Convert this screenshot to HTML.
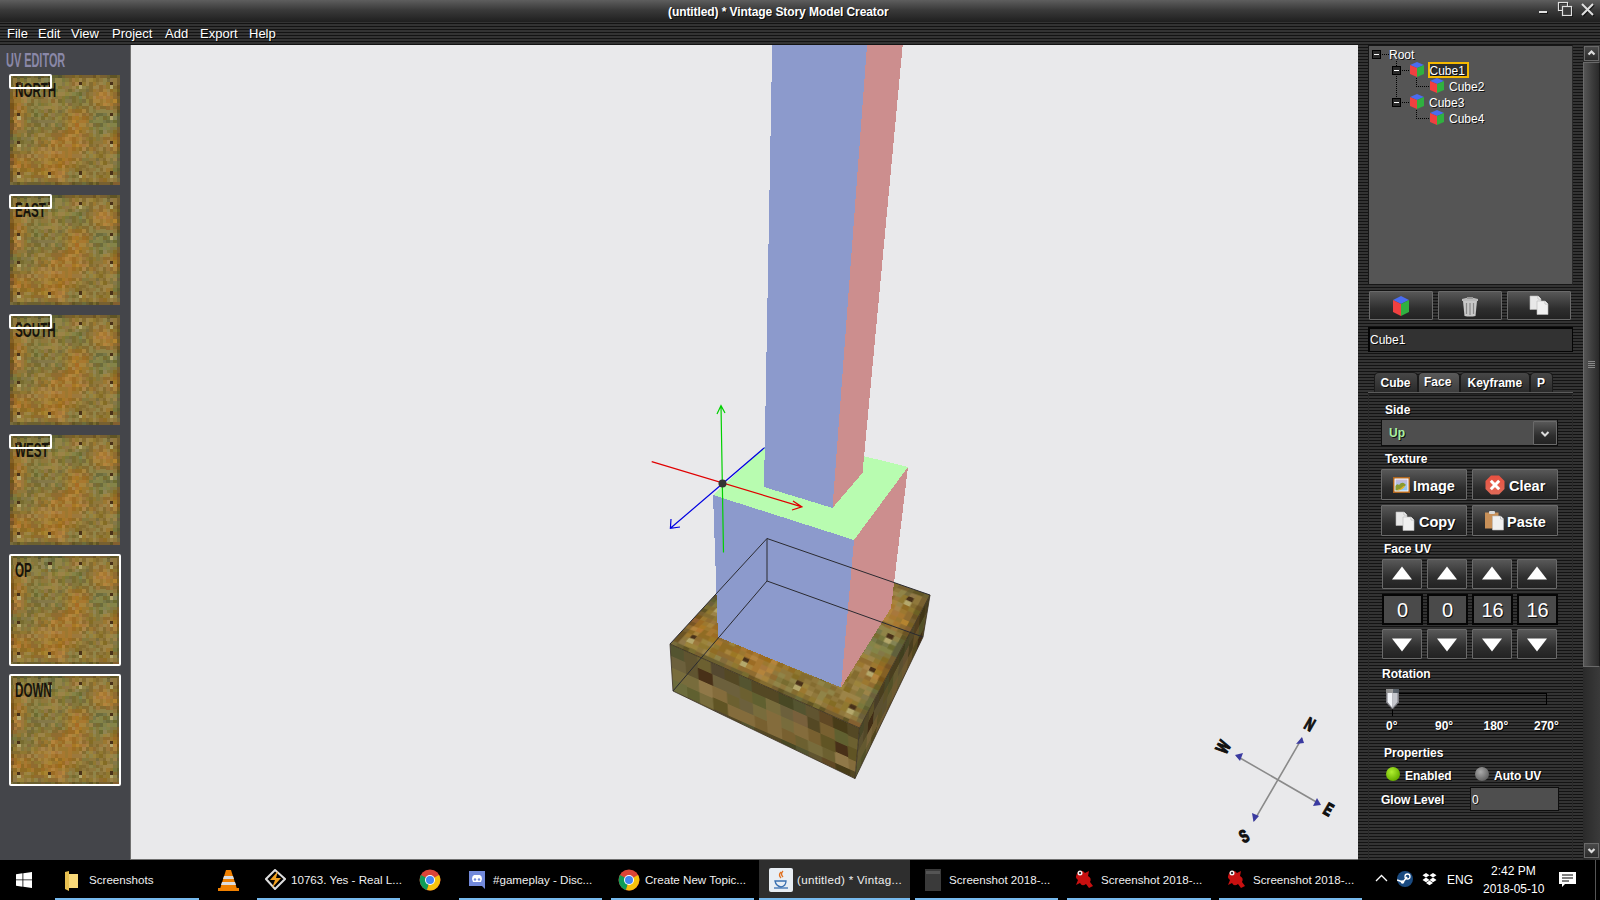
<!DOCTYPE html><html><head><meta charset='utf-8'><style>
*{margin:0;padding:0;box-sizing:border-box}
html,body{width:1600px;height:900px;overflow:hidden;background:#000;font-family:"Liberation Sans",sans-serif}
.a{position:absolute}
.t{position:absolute;white-space:nowrap;color:#fff;font-size:12px;line-height:1;text-shadow:1px 1px 0 rgba(0,0,0,.75)}
.stripes{background:repeating-linear-gradient(to bottom,#333 0px,#333 1px,#131313 1px,#131313 2px,#333 2px,#333 3px)}
.btn{position:absolute;border:1px solid #6a6a6a;background:linear-gradient(#585858,#2e2e2e 62%,#222);border-radius:1px}
.fld{position:absolute;border:1px solid #0e0e0e}
.lbl{position:absolute;white-space:nowrap;color:#fff;font-size:12px;font-weight:bold;line-height:1;text-shadow:1px 1px 0 rgba(0,0,0,.8)}
.tb{position:absolute;white-space:nowrap;color:#fff;font-size:13px;line-height:1}
.ul{position:absolute;top:898px;height:2px;background:#76b9ed}
</style></head><body><div class="a" style="left:0;top:0;width:1600px;height:22px;background:linear-gradient(#5e5e5e,#3a3a3a 45%,#1f1f1f)"></div><div class="t" style="left:668px;top:6px;font-size:12px;font-weight:bold;letter-spacing:-0.08px">(untitled) * Vintage Story Model Creator</div><svg class="a" style="left:1530px;top:0" width="70" height="22" viewBox="1530 0 70 22"><g stroke="#000" stroke-opacity=".6" fill="none" transform="translate(1,1)"><path d="M1539 12H1547" stroke-width="2"/><rect x="1558.5" y="2.5" width="9" height="8"/><rect x="1562.5" y="6.5" width="9" height="9"/><path d="M1582 4L1593 15M1593 4L1582 15" stroke-width="2"/></g><g stroke="#e0e0e0" fill="none"><path d="M1539 12H1547" stroke-width="2"/><rect x="1558.5" y="2.5" width="9" height="8" stroke-width="1.2"/><rect x="1562.5" y="6.5" width="9" height="9" fill="#3a3a3a" stroke-width="1.2"/><path d="M1582 4L1593 15M1593 4L1582 15" stroke-width="2"/></g></svg><div class="a stripes" style="left:0;top:22px;width:1600px;height:838px"></div><div class="t" style="left:7px;top:27px;font-size:13px">File</div><div class="t" style="left:38px;top:27px;font-size:13px">Edit</div><div class="t" style="left:71px;top:27px;font-size:13px">View</div><div class="t" style="left:112px;top:27px;font-size:13px">Project</div><div class="t" style="left:165px;top:27px;font-size:13px">Add</div><div class="t" style="left:200px;top:27px;font-size:13px">Export</div><div class="t" style="left:249px;top:27px;font-size:13px">Help</div><div class="a" style="left:0;top:45px;width:130px;height:815px;background:#44454a"></div><div class="a" style="left:6px;top:49px;font-size:21px;font-weight:bold;color:#8a88a8;transform:scaleX(0.52);transform-origin:0 0;white-space:nowrap;line-height:1">UV EDITOR</div><svg width="0" height="0" style="position:absolute"><defs><symbol id="tex" viewBox="0 0 32 32"><path fill="#786c3c" d="M0 0h1.08v1.08h-1.08zM6 0h1.08v1.08h-1.08zM2 1h1.08v1.08h-1.08zM4 1h1.08v1.08h-1.08zM8 1h1.08v1.08h-1.08zM28 1h1.08v1.08h-1.08zM22 4h1.08v1.08h-1.08zM17 6h1.08v1.08h-1.08zM21 7h1.08v1.08h-1.08zM14 10h1.08v1.08h-1.08zM6 12h1.08v1.08h-1.08zM6 13h2.08v1.08h-2.08zM10 14h1.08v1.08h-1.08zM24 14h1.08v1.08h-1.08zM6 15h1.08v1.08h-1.08zM5 16h1.08v1.08h-1.08zM25 24h1.08v1.08h-1.08zM31 30h1.08v1.08h-1.08zM0 31h1.08v1.08h-1.08z"/><path fill="#605424" d="M1 0h1.08v1.08h-1.08zM9 0h1.08v1.08h-1.08zM29 0h2.08v1.08h-2.08zM31 10h1.08v1.08h-1.08zM0 21h1.08v1.08h-1.08zM2 31h1.08v1.08h-1.08zM18 31h1.08v1.08h-1.08zM23 31h1.08v1.08h-1.08zM25 31h1.08v1.08h-1.08zM29 31h1.08v1.08h-1.08z"/><path fill="#606030" d="M2 0h1.08v1.08h-1.08zM4 0h1.08v1.08h-1.08zM12 0h2.08v1.08h-2.08zM31 11h1.08v1.08h-1.08zM0 18h1.08v1.08h-1.08zM31 27h1.08v1.08h-1.08z"/><path fill="#605430" d="M3 0h1.08v1.08h-1.08zM0 17h1.08v1.08h-1.08z"/><path fill="#6c6030" d="M5 0h1.08v1.08h-1.08zM7 0h1.08v1.08h-1.08zM10 0h1.08v1.08h-1.08zM15 0h1.08v1.08h-1.08zM28 0h1.08v1.08h-1.08zM31 0h1.08v1.08h-1.08zM0 1h1.08v1.08h-1.08zM0 2h1.08v1.08h-1.08zM31 28h1.08v1.08h-1.08zM1 31h1.08v1.08h-1.08zM5 31h4.08v1.08h-4.08zM10 31h2.08v1.08h-2.08zM19 31h2.08v1.08h-2.08zM22 31h1.08v1.08h-1.08z"/><path fill="#545430" d="M8 0h1.08v1.08h-1.08zM14 0h1.08v1.08h-1.08z"/><path fill="#545424" d="M11 0h1.08v1.08h-1.08z"/><path fill="#786030" d="M16 0h2.08v1.08h-2.08zM21 0h3.08v1.08h-3.08zM26 0h2.08v1.08h-2.08zM31 1h1.08v1.08h-1.08zM31 2h1.08v1.08h-1.08zM0 4h1.08v1.08h-1.08zM31 6h1.08v1.08h-1.08zM31 15h1.08v1.08h-1.08zM31 16h1.08v1.08h-1.08zM0 22h1.08v1.08h-1.08zM0 27h1.08v1.08h-1.08zM4 31h1.08v1.08h-1.08zM9 31h1.08v1.08h-1.08zM17 31h1.08v1.08h-1.08zM26 31h3.08v1.08h-3.08z"/><path fill="#786024" d="M18 0h1.08v1.08h-1.08zM20 0h1.08v1.08h-1.08zM0 5h1.08v1.08h-1.08zM0 6h1.08v1.08h-1.08zM31 7h1.08v1.08h-1.08zM0 12h1.08v1.08h-1.08zM31 21h1.08v1.08h-1.08zM14 31h1.08v1.08h-1.08z"/><path fill="#846c30" d="M19 0h1.08v1.08h-1.08zM25 0h1.08v1.08h-1.08zM17 1h1.08v1.08h-1.08zM21 1h1.08v1.08h-1.08zM25 1h1.08v1.08h-1.08zM23 2h1.08v1.08h-1.08zM23 3h1.08v1.08h-1.08zM30 3h1.08v1.08h-1.08zM10 4h1.08v1.08h-1.08zM23 4h1.08v1.08h-1.08zM5 5h1.08v1.08h-1.08zM22 5h1.08v1.08h-1.08zM7 6h1.08v1.08h-1.08zM9 6h1.08v1.08h-1.08zM22 6h1.08v1.08h-1.08zM6 7h1.08v1.08h-1.08zM23 7h1.08v1.08h-1.08zM5 8h1.08v1.08h-1.08zM23 8h1.08v1.08h-1.08zM19 9h1.08v1.08h-1.08zM21 9h2.08v1.08h-2.08zM24 9h1.08v1.08h-1.08zM26 9h2.08v1.08h-2.08zM30 9h1.08v1.08h-1.08zM22 10h1.08v1.08h-1.08zM4 11h1.08v1.08h-1.08zM16 11h1.08v1.08h-1.08zM23 11h1.08v1.08h-1.08zM4 12h1.08v1.08h-1.08zM12 12h1.08v1.08h-1.08zM15 12h1.08v1.08h-1.08zM5 14h1.08v1.08h-1.08zM15 14h1.08v1.08h-1.08zM9 15h1.08v1.08h-1.08zM13 15h1.08v1.08h-1.08zM9 16h1.08v1.08h-1.08zM12 16h2.08v1.08h-2.08zM8 18h1.08v1.08h-1.08zM23 18h1.08v1.08h-1.08zM9 19h1.08v1.08h-1.08zM1 20h1.08v1.08h-1.08zM8 20h1.08v1.08h-1.08zM10 20h1.08v1.08h-1.08zM23 20h1.08v1.08h-1.08zM25 20h1.08v1.08h-1.08zM22 21h1.08v1.08h-1.08zM27 21h1.08v1.08h-1.08zM1 22h2.08v1.08h-2.08zM5 22h1.08v1.08h-1.08zM21 22h1.08v1.08h-1.08zM25 22h1.08v1.08h-1.08zM27 22h1.08v1.08h-1.08zM27 24h1.08v1.08h-1.08zM22 25h1.08v1.08h-1.08zM20 26h2.08v1.08h-2.08zM25 26h1.08v1.08h-1.08zM20 27h1.08v1.08h-1.08zM22 27h1.08v1.08h-1.08zM26 27h1.08v1.08h-1.08zM23 28h1.08v1.08h-1.08zM25 28h1.08v1.08h-1.08zM27 28h1.08v1.08h-1.08zM30 28h1.08v1.08h-1.08zM20 30h1.08v1.08h-1.08zM22 30h1.08v1.08h-1.08zM15 31h2.08v1.08h-2.08z"/><path fill="#6c5424" d="M24 0h1.08v1.08h-1.08zM31 3h1.08v1.08h-1.08zM31 5h1.08v1.08h-1.08zM31 9h1.08v1.08h-1.08zM0 16h1.08v1.08h-1.08zM0 28h1.08v1.08h-1.08zM0 29h1.08v1.08h-1.08zM0 30h1.08v1.08h-1.08zM13 31h1.08v1.08h-1.08z"/><path fill="#90783c" d="M1 1h1.08v1.08h-1.08zM26 1h1.08v1.08h-1.08zM30 1h1.08v1.08h-1.08zM1 2h1.08v1.08h-1.08zM6 2h1.08v1.08h-1.08zM17 2h1.08v1.08h-1.08zM25 2h1.08v1.08h-1.08zM30 2h1.08v1.08h-1.08zM4 3h1.08v1.08h-1.08zM15 3h1.08v1.08h-1.08zM17 3h1.08v1.08h-1.08zM2 4h1.08v1.08h-1.08zM16 4h1.08v1.08h-1.08zM18 4h1.08v1.08h-1.08zM23 5h1.08v1.08h-1.08zM6 6h1.08v1.08h-1.08zM12 6h1.08v1.08h-1.08zM14 6h1.08v1.08h-1.08zM9 7h2.08v1.08h-2.08zM14 9h1.08v1.08h-1.08zM30 10h1.08v1.08h-1.08zM16 12h1.08v1.08h-1.08zM23 12h1.08v1.08h-1.08zM15 13h1.08v1.08h-1.08zM6 14h1.08v1.08h-1.08zM22 14h1.08v1.08h-1.08zM12 15h1.08v1.08h-1.08zM2 16h3.08v1.08h-3.08zM10 16h1.08v1.08h-1.08zM23 16h1.08v1.08h-1.08zM10 18h1.08v1.08h-1.08zM26 18h1.08v1.08h-1.08zM24 19h3.08v1.08h-3.08zM7 20h1.08v1.08h-1.08zM24 20h1.08v1.08h-1.08zM4 21h1.08v1.08h-1.08zM25 21h1.08v1.08h-1.08zM28 22h1.08v1.08h-1.08zM27 23h1.08v1.08h-1.08zM23 24h2.08v1.08h-2.08zM26 24h1.08v1.08h-1.08zM21 25h1.08v1.08h-1.08zM28 25h1.08v1.08h-1.08zM22 26h1.08v1.08h-1.08zM26 26h1.08v1.08h-1.08zM17 27h2.08v1.08h-2.08zM21 27h1.08v1.08h-1.08zM23 27h2.08v1.08h-2.08zM16 28h1.08v1.08h-1.08zM18 28h1.08v1.08h-1.08zM22 28h1.08v1.08h-1.08zM26 28h1.08v1.08h-1.08zM1 29h1.08v1.08h-1.08zM23 29h1.08v1.08h-1.08zM27 29h1.08v1.08h-1.08zM4 30h1.08v1.08h-1.08zM9 30h1.08v1.08h-1.08zM16 30h1.08v1.08h-1.08zM18 30h1.08v1.08h-1.08zM25 30h1.08v1.08h-1.08zM28 30h1.08v1.08h-1.08zM30 30h1.08v1.08h-1.08z"/><path fill="#847830" d="M3 1h1.08v1.08h-1.08zM4 2h1.08v1.08h-1.08zM14 3h1.08v1.08h-1.08zM19 3h1.08v1.08h-1.08zM9 4h1.08v1.08h-1.08zM12 5h1.08v1.08h-1.08zM15 6h1.08v1.08h-1.08zM15 7h1.08v1.08h-1.08zM9 8h1.08v1.08h-1.08zM15 8h1.08v1.08h-1.08zM9 10h1.08v1.08h-1.08zM4 15h1.08v1.08h-1.08zM8 15h1.08v1.08h-1.08zM23 15h1.08v1.08h-1.08zM8 16h1.08v1.08h-1.08z"/><path fill="#908448" d="M5 1h1.08v1.08h-1.08zM9 1h1.08v1.08h-1.08zM13 1h2.08v1.08h-2.08zM27 1h1.08v1.08h-1.08zM3 2h1.08v1.08h-1.08zM5 2h1.08v1.08h-1.08zM9 2h1.08v1.08h-1.08zM13 2h2.08v1.08h-2.08zM27 2h1.08v1.08h-1.08zM7 3h1.08v1.08h-1.08zM13 3h1.08v1.08h-1.08zM21 3h1.08v1.08h-1.08zM6 4h3.08v1.08h-3.08zM14 4h2.08v1.08h-2.08zM7 5h1.08v1.08h-1.08zM17 5h1.08v1.08h-1.08zM5 6h1.08v1.08h-1.08zM21 6h1.08v1.08h-1.08zM5 7h1.08v1.08h-1.08zM7 7h1.08v1.08h-1.08zM11 7h1.08v1.08h-1.08zM4 8h1.08v1.08h-1.08zM7 8h1.08v1.08h-1.08zM14 8h1.08v1.08h-1.08zM21 8h2.08v1.08h-2.08zM6 9h1.08v1.08h-1.08zM8 9h2.08v1.08h-2.08zM15 9h1.08v1.08h-1.08zM23 9h1.08v1.08h-1.08zM13 10h1.08v1.08h-1.08zM23 10h1.08v1.08h-1.08zM25 10h5.08v1.08h-5.08zM6 11h1.08v1.08h-1.08zM11 11h1.08v1.08h-1.08zM24 11h1.08v1.08h-1.08zM28 11h1.08v1.08h-1.08zM30 11h1.08v1.08h-1.08zM8 12h1.08v1.08h-1.08zM10 12h1.08v1.08h-1.08zM13 12h1.08v1.08h-1.08zM25 12h1.08v1.08h-1.08zM13 13h1.08v1.08h-1.08zM28 14h1.08v1.08h-1.08zM5 15h1.08v1.08h-1.08zM7 15h1.08v1.08h-1.08zM15 15h1.08v1.08h-1.08zM11 16h1.08v1.08h-1.08zM24 17h1.08v1.08h-1.08zM26 17h1.08v1.08h-1.08zM6 18h1.08v1.08h-1.08zM4 20h1.08v1.08h-1.08zM22 22h1.08v1.08h-1.08zM23 23h1.08v1.08h-1.08zM30 23h1.08v1.08h-1.08zM23 26h1.08v1.08h-1.08zM25 27h1.08v1.08h-1.08zM17 28h1.08v1.08h-1.08zM19 28h1.08v1.08h-1.08zM24 28h1.08v1.08h-1.08zM24 29h1.08v1.08h-1.08zM30 29h1.08v1.08h-1.08zM7 30h1.08v1.08h-1.08zM17 30h1.08v1.08h-1.08zM19 30h1.08v1.08h-1.08z"/><path fill="#84783c" d="M6 1h2.08v1.08h-2.08zM16 1h1.08v1.08h-1.08zM7 2h1.08v1.08h-1.08zM6 3h1.08v1.08h-1.08zM22 3h1.08v1.08h-1.08zM20 4h2.08v1.08h-2.08zM10 5h1.08v1.08h-1.08zM13 6h1.08v1.08h-1.08zM19 6h1.08v1.08h-1.08zM8 7h1.08v1.08h-1.08zM19 7h1.08v1.08h-1.08zM10 8h1.08v1.08h-1.08zM18 8h2.08v1.08h-2.08zM5 9h1.08v1.08h-1.08zM7 9h1.08v1.08h-1.08zM16 9h1.08v1.08h-1.08zM18 9h1.08v1.08h-1.08zM5 10h1.08v1.08h-1.08zM8 10h1.08v1.08h-1.08zM15 10h1.08v1.08h-1.08zM24 10h1.08v1.08h-1.08zM13 11h2.08v1.08h-2.08zM5 12h1.08v1.08h-1.08zM7 12h1.08v1.08h-1.08zM11 12h1.08v1.08h-1.08zM14 13h1.08v1.08h-1.08zM11 14h1.08v1.08h-1.08zM10 15h2.08v1.08h-2.08zM25 15h1.08v1.08h-1.08zM30 15h1.08v1.08h-1.08zM7 16h1.08v1.08h-1.08zM25 16h1.08v1.08h-1.08zM28 16h2.08v1.08h-2.08zM1 17h1.08v1.08h-1.08zM3 17h1.08v1.08h-1.08zM25 17h1.08v1.08h-1.08zM4 18h1.08v1.08h-1.08zM25 18h1.08v1.08h-1.08zM1 19h1.08v1.08h-1.08zM4 19h2.08v1.08h-2.08zM3 20h1.08v1.08h-1.08zM6 20h1.08v1.08h-1.08zM3 21h1.08v1.08h-1.08zM5 21h1.08v1.08h-1.08zM21 24h2.08v1.08h-2.08zM29 24h1.08v1.08h-1.08zM29 25h1.08v1.08h-1.08zM24 26h1.08v1.08h-1.08zM30 26h1.08v1.08h-1.08zM17 29h1.08v1.08h-1.08zM19 29h1.08v1.08h-1.08z"/><path fill="#848454" d="M10 1h1.08v1.08h-1.08zM11 4h1.08v1.08h-1.08zM30 12h1.08v1.08h-1.08zM27 15h1.08v1.08h-1.08z"/><path fill="#787848" d="M11 1h1.08v1.08h-1.08zM10 3h1.08v1.08h-1.08zM12 3h1.08v1.08h-1.08zM27 11h1.08v1.08h-1.08zM24 12h1.08v1.08h-1.08zM27 13h1.08v1.08h-1.08zM29 13h1.08v1.08h-1.08z"/><path fill="#6c6c3c" d="M12 1h1.08v1.08h-1.08zM10 2h1.08v1.08h-1.08zM25 11h2.08v1.08h-2.08zM28 13h1.08v1.08h-1.08zM26 14h1.08v1.08h-1.08zM31 23h1.08v1.08h-1.08zM31 25h1.08v1.08h-1.08zM31 26h1.08v1.08h-1.08zM21 31h1.08v1.08h-1.08z"/><path fill="#78783c" d="M15 1h1.08v1.08h-1.08zM12 2h1.08v1.08h-1.08zM13 4h1.08v1.08h-1.08zM19 5h1.08v1.08h-1.08zM16 6h1.08v1.08h-1.08zM20 7h1.08v1.08h-1.08zM8 8h1.08v1.08h-1.08zM28 12h1.08v1.08h-1.08zM23 13h1.08v1.08h-1.08zM13 14h1.08v1.08h-1.08zM1 18h1.08v1.08h-1.08zM30 27h1.08v1.08h-1.08z"/><path fill="#9c783c" d="M18 1h1.08v1.08h-1.08zM27 3h1.08v1.08h-1.08zM4 4h1.08v1.08h-1.08zM25 4h1.08v1.08h-1.08zM1 5h1.08v1.08h-1.08zM24 5h1.08v1.08h-1.08zM3 8h1.08v1.08h-1.08zM25 9h1.08v1.08h-1.08zM29 9h1.08v1.08h-1.08zM22 11h1.08v1.08h-1.08zM3 12h1.08v1.08h-1.08zM3 13h1.08v1.08h-1.08zM3 14h1.08v1.08h-1.08zM3 15h1.08v1.08h-1.08zM14 16h1.08v1.08h-1.08zM21 18h1.08v1.08h-1.08zM22 19h1.08v1.08h-1.08zM26 20h1.08v1.08h-1.08zM28 20h1.08v1.08h-1.08zM8 21h1.08v1.08h-1.08zM10 21h1.08v1.08h-1.08zM28 21h1.08v1.08h-1.08zM3 23h1.08v1.08h-1.08zM8 23h2.08v1.08h-2.08zM18 23h3.08v1.08h-3.08zM9 25h1.08v1.08h-1.08zM3 29h1.08v1.08h-1.08zM15 29h1.08v1.08h-1.08z"/><path fill="#907830" d="M19 1h1.08v1.08h-1.08zM24 1h1.08v1.08h-1.08zM21 2h1.08v1.08h-1.08zM28 2h1.08v1.08h-1.08zM3 3h1.08v1.08h-1.08zM28 3h1.08v1.08h-1.08zM1 4h1.08v1.08h-1.08zM30 4h1.08v1.08h-1.08zM23 6h1.08v1.08h-1.08zM20 9h1.08v1.08h-1.08zM12 10h1.08v1.08h-1.08zM5 11h1.08v1.08h-1.08zM15 11h1.08v1.08h-1.08zM4 13h1.08v1.08h-1.08zM4 14h1.08v1.08h-1.08zM16 14h1.08v1.08h-1.08zM16 15h1.08v1.08h-1.08zM2 17h1.08v1.08h-1.08zM7 17h1.08v1.08h-1.08zM10 17h2.08v1.08h-2.08zM23 17h1.08v1.08h-1.08zM29 17h1.08v1.08h-1.08zM9 18h1.08v1.08h-1.08zM12 18h1.08v1.08h-1.08zM22 18h1.08v1.08h-1.08zM24 18h1.08v1.08h-1.08zM11 19h1.08v1.08h-1.08zM1 21h1.08v1.08h-1.08zM7 21h1.08v1.08h-1.08zM3 22h2.08v1.08h-2.08zM26 22h1.08v1.08h-1.08zM22 23h1.08v1.08h-1.08zM25 23h1.08v1.08h-1.08zM7 25h2.08v1.08h-2.08zM19 25h1.08v1.08h-1.08zM24 25h1.08v1.08h-1.08zM19 26h1.08v1.08h-1.08zM29 27h1.08v1.08h-1.08zM6 28h1.08v1.08h-1.08zM28 28h1.08v1.08h-1.08zM4 29h2.08v1.08h-2.08zM25 29h1.08v1.08h-1.08zM28 29h1.08v1.08h-1.08zM6 30h1.08v1.08h-1.08zM10 30h1.08v1.08h-1.08zM21 30h1.08v1.08h-1.08zM23 30h1.08v1.08h-1.08z"/><path fill="#9c8448" d="M20 1h1.08v1.08h-1.08zM22 1h1.08v1.08h-1.08zM22 2h1.08v1.08h-1.08zM26 2h1.08v1.08h-1.08zM1 3h1.08v1.08h-1.08zM5 3h1.08v1.08h-1.08zM18 3h1.08v1.08h-1.08zM24 3h2.08v1.08h-2.08zM5 4h1.08v1.08h-1.08zM28 4h1.08v1.08h-1.08zM11 5h1.08v1.08h-1.08zM14 5h2.08v1.08h-2.08zM11 6h1.08v1.08h-1.08zM13 7h1.08v1.08h-1.08zM12 8h2.08v1.08h-2.08zM16 8h1.08v1.08h-1.08zM24 8h1.08v1.08h-1.08zM10 9h2.08v1.08h-2.08zM13 9h1.08v1.08h-1.08zM16 10h1.08v1.08h-1.08zM12 14h1.08v1.08h-1.08zM23 14h1.08v1.08h-1.08zM22 16h1.08v1.08h-1.08zM4 17h1.08v1.08h-1.08zM8 17h2.08v1.08h-2.08zM28 17h1.08v1.08h-1.08zM11 18h1.08v1.08h-1.08zM7 19h1.08v1.08h-1.08zM27 20h1.08v1.08h-1.08zM2 21h1.08v1.08h-1.08zM26 21h1.08v1.08h-1.08zM6 22h1.08v1.08h-1.08zM7 23h1.08v1.08h-1.08zM21 23h1.08v1.08h-1.08zM29 23h1.08v1.08h-1.08zM28 24h1.08v1.08h-1.08zM30 24h1.08v1.08h-1.08zM27 26h3.08v1.08h-3.08zM27 27h1.08v1.08h-1.08zM5 28h1.08v1.08h-1.08zM22 29h1.08v1.08h-1.08zM5 30h1.08v1.08h-1.08zM24 30h1.08v1.08h-1.08zM29 30h1.08v1.08h-1.08z"/><path fill="#9c843c" d="M23 1h1.08v1.08h-1.08zM4 5h1.08v1.08h-1.08zM3 7h1.08v1.08h-1.08zM12 9h1.08v1.08h-1.08zM17 9h1.08v1.08h-1.08zM17 11h1.08v1.08h-1.08zM16 13h1.08v1.08h-1.08zM27 17h1.08v1.08h-1.08zM7 18h1.08v1.08h-1.08zM6 21h1.08v1.08h-1.08zM23 22h1.08v1.08h-1.08zM24 23h1.08v1.08h-1.08zM28 23h1.08v1.08h-1.08zM6 24h1.08v1.08h-1.08zM20 25h1.08v1.08h-1.08zM26 25h1.08v1.08h-1.08zM8 26h1.08v1.08h-1.08zM4 28h1.08v1.08h-1.08zM21 28h1.08v1.08h-1.08zM2 30h2.08v1.08h-2.08z"/><path fill="#907848" d="M29 1h1.08v1.08h-1.08zM16 3h1.08v1.08h-1.08zM10 6h1.08v1.08h-1.08zM10 10h1.08v1.08h-1.08zM12 11h1.08v1.08h-1.08zM6 17h1.08v1.08h-1.08zM24 22h1.08v1.08h-1.08zM25 25h1.08v1.08h-1.08zM1 30h1.08v1.08h-1.08z"/><path fill="#483018" d="M2 2h1.08v1.08h-1.08zM11 2h1.08v1.08h-1.08zM20 2h1.08v1.08h-1.08zM29 2h1.08v1.08h-1.08zM2 11h1.08v1.08h-1.08zM29 11h1.08v1.08h-1.08zM2 19h1.08v1.08h-1.08zM29 19h1.08v1.08h-1.08zM2 28h1.08v1.08h-1.08zM11 28h1.08v1.08h-1.08zM20 28h1.08v1.08h-1.08zM29 28h1.08v1.08h-1.08z"/><path fill="#908454" d="M8 2h1.08v1.08h-1.08zM9 3h1.08v1.08h-1.08zM19 4h1.08v1.08h-1.08zM9 14h1.08v1.08h-1.08zM24 16h1.08v1.08h-1.08zM27 16h1.08v1.08h-1.08z"/><path fill="#847848" d="M15 2h1.08v1.08h-1.08zM6 5h1.08v1.08h-1.08zM9 5h1.08v1.08h-1.08zM21 5h1.08v1.08h-1.08zM16 7h2.08v1.08h-2.08zM9 11h1.08v1.08h-1.08zM8 13h5.08v1.08h-5.08zM14 14h1.08v1.08h-1.08zM29 15h1.08v1.08h-1.08zM3 18h1.08v1.08h-1.08zM5 18h1.08v1.08h-1.08zM30 25h1.08v1.08h-1.08z"/><path fill="#90843c" d="M16 2h1.08v1.08h-1.08zM8 5h1.08v1.08h-1.08zM13 5h1.08v1.08h-1.08zM16 5h1.08v1.08h-1.08zM22 7h1.08v1.08h-1.08zM11 8h1.08v1.08h-1.08zM14 12h1.08v1.08h-1.08z"/><path fill="#906c30" d="M18 2h1.08v1.08h-1.08zM26 3h1.08v1.08h-1.08zM3 4h1.08v1.08h-1.08zM26 4h1.08v1.08h-1.08zM3 5h1.08v1.08h-1.08zM30 5h1.08v1.08h-1.08zM30 6h1.08v1.08h-1.08zM12 7h1.08v1.08h-1.08zM30 8h1.08v1.08h-1.08zM28 9h1.08v1.08h-1.08zM18 10h1.08v1.08h-1.08zM21 11h1.08v1.08h-1.08zM1 14h1.08v1.08h-1.08zM2 15h1.08v1.08h-1.08zM1 16h1.08v1.08h-1.08zM15 16h1.08v1.08h-1.08zM12 17h3.08v1.08h-3.08zM21 17h2.08v1.08h-2.08zM13 18h1.08v1.08h-1.08zM27 18h2.08v1.08h-2.08zM8 19h1.08v1.08h-1.08zM21 19h1.08v1.08h-1.08zM12 21h1.08v1.08h-1.08zM24 21h1.08v1.08h-1.08zM29 21h1.08v1.08h-1.08zM30 22h1.08v1.08h-1.08zM2 23h1.08v1.08h-1.08zM4 23h1.08v1.08h-1.08zM6 23h1.08v1.08h-1.08zM7 24h1.08v1.08h-1.08zM20 24h1.08v1.08h-1.08zM6 25h1.08v1.08h-1.08zM0 26h1.08v1.08h-1.08zM6 26h2.08v1.08h-2.08zM3 28h1.08v1.08h-1.08zM7 29h3.08v1.08h-3.08zM16 29h1.08v1.08h-1.08zM11 30h3.08v1.08h-3.08zM26 30h1.08v1.08h-1.08z"/><path fill="#a88448" d="M19 2h1.08v1.08h-1.08zM28 5h1.08v1.08h-1.08zM3 6h2.08v1.08h-2.08zM24 6h1.08v1.08h-1.08zM4 7h1.08v1.08h-1.08zM18 15h1.08v1.08h-1.08zM20 19h1.08v1.08h-1.08zM28 19h1.08v1.08h-1.08zM9 21h1.08v1.08h-1.08zM21 21h1.08v1.08h-1.08zM11 22h1.08v1.08h-1.08zM14 22h1.08v1.08h-1.08zM20 22h1.08v1.08h-1.08zM5 23h1.08v1.08h-1.08zM18 25h1.08v1.08h-1.08zM14 30h1.08v1.08h-1.08z"/><path fill="#9c7830" d="M24 2h1.08v1.08h-1.08zM24 4h1.08v1.08h-1.08zM25 5h1.08v1.08h-1.08zM29 5h1.08v1.08h-1.08zM2 6h1.08v1.08h-1.08zM1 7h2.08v1.08h-2.08zM26 7h1.08v1.08h-1.08zM29 7h1.08v1.08h-1.08zM26 8h1.08v1.08h-1.08zM4 9h1.08v1.08h-1.08zM4 10h1.08v1.08h-1.08zM17 10h1.08v1.08h-1.08zM3 11h1.08v1.08h-1.08zM20 12h1.08v1.08h-1.08zM17 13h1.08v1.08h-1.08zM19 13h1.08v1.08h-1.08zM22 13h1.08v1.08h-1.08zM18 14h1.08v1.08h-1.08zM21 15h2.08v1.08h-2.08zM21 16h1.08v1.08h-1.08zM16 17h1.08v1.08h-1.08zM19 17h1.08v1.08h-1.08zM29 18h1.08v1.08h-1.08zM10 19h1.08v1.08h-1.08zM14 19h1.08v1.08h-1.08zM19 19h1.08v1.08h-1.08zM27 19h1.08v1.08h-1.08zM14 21h3.08v1.08h-3.08zM19 21h1.08v1.08h-1.08zM23 21h1.08v1.08h-1.08zM7 22h1.08v1.08h-1.08zM9 22h1.08v1.08h-1.08zM16 22h1.08v1.08h-1.08zM18 22h2.08v1.08h-2.08zM29 22h1.08v1.08h-1.08zM1 23h1.08v1.08h-1.08zM16 23h1.08v1.08h-1.08zM2 24h1.08v1.08h-1.08zM9 24h1.08v1.08h-1.08zM11 24h1.08v1.08h-1.08zM3 25h1.08v1.08h-1.08zM5 25h1.08v1.08h-1.08zM12 25h2.08v1.08h-2.08zM17 25h1.08v1.08h-1.08zM17 26h1.08v1.08h-1.08zM10 27h1.08v1.08h-1.08zM14 27h1.08v1.08h-1.08zM16 27h1.08v1.08h-1.08zM28 27h1.08v1.08h-1.08zM1 28h1.08v1.08h-1.08zM10 29h1.08v1.08h-1.08zM21 29h1.08v1.08h-1.08z"/><path fill="#786c30" d="M0 3h1.08v1.08h-1.08zM8 3h1.08v1.08h-1.08zM12 4h1.08v1.08h-1.08zM17 4h1.08v1.08h-1.08zM8 6h1.08v1.08h-1.08zM18 6h1.08v1.08h-1.08zM14 7h1.08v1.08h-1.08zM18 7h1.08v1.08h-1.08zM6 8h1.08v1.08h-1.08zM20 8h1.08v1.08h-1.08zM6 10h1.08v1.08h-1.08zM11 10h1.08v1.08h-1.08zM9 12h1.08v1.08h-1.08zM27 12h1.08v1.08h-1.08zM7 14h2.08v1.08h-2.08zM25 14h1.08v1.08h-1.08zM14 15h1.08v1.08h-1.08zM6 16h1.08v1.08h-1.08zM5 17h1.08v1.08h-1.08zM2 18h1.08v1.08h-1.08zM3 19h1.08v1.08h-1.08zM6 19h1.08v1.08h-1.08zM0 20h1.08v1.08h-1.08zM23 25h1.08v1.08h-1.08zM18 29h1.08v1.08h-1.08zM3 31h1.08v1.08h-1.08zM12 31h1.08v1.08h-1.08zM24 31h1.08v1.08h-1.08z"/><path fill="#b4a86c" d="M2 3h1.08v1.08h-1.08zM11 3h1.08v1.08h-1.08zM20 3h1.08v1.08h-1.08zM29 3h1.08v1.08h-1.08zM2 12h1.08v1.08h-1.08zM29 12h1.08v1.08h-1.08zM2 20h1.08v1.08h-1.08zM29 20h1.08v1.08h-1.08zM2 29h1.08v1.08h-1.08zM11 29h1.08v1.08h-1.08zM20 29h1.08v1.08h-1.08zM29 29h1.08v1.08h-1.08z"/><path fill="#a8843c" d="M27 4h1.08v1.08h-1.08zM24 7h2.08v1.08h-2.08zM27 7h1.08v1.08h-1.08zM28 8h1.08v1.08h-1.08zM1 10h1.08v1.08h-1.08zM3 10h1.08v1.08h-1.08zM21 10h1.08v1.08h-1.08zM18 11h1.08v1.08h-1.08zM20 11h1.08v1.08h-1.08zM17 14h1.08v1.08h-1.08zM20 14h2.08v1.08h-2.08zM18 17h1.08v1.08h-1.08zM20 18h1.08v1.08h-1.08zM16 19h2.08v1.08h-2.08zM11 20h1.08v1.08h-1.08zM13 20h1.08v1.08h-1.08zM15 20h1.08v1.08h-1.08zM22 20h1.08v1.08h-1.08zM11 21h1.08v1.08h-1.08zM13 21h1.08v1.08h-1.08zM30 21h1.08v1.08h-1.08zM8 22h1.08v1.08h-1.08zM10 22h1.08v1.08h-1.08zM11 23h1.08v1.08h-1.08zM3 24h1.08v1.08h-1.08zM8 24h1.08v1.08h-1.08zM10 24h1.08v1.08h-1.08zM19 24h1.08v1.08h-1.08zM10 25h1.08v1.08h-1.08zM2 27h1.08v1.08h-1.08zM15 27h1.08v1.08h-1.08zM8 28h1.08v1.08h-1.08zM12 29h1.08v1.08h-1.08zM15 30h1.08v1.08h-1.08z"/><path fill="#906c24" d="M29 4h1.08v1.08h-1.08zM1 8h1.08v1.08h-1.08zM25 8h1.08v1.08h-1.08zM3 9h1.08v1.08h-1.08zM19 10h2.08v1.08h-2.08zM1 11h1.08v1.08h-1.08zM17 12h1.08v1.08h-1.08zM22 12h1.08v1.08h-1.08zM16 16h1.08v1.08h-1.08zM20 16h1.08v1.08h-1.08zM30 17h1.08v1.08h-1.08zM9 20h1.08v1.08h-1.08zM20 21h1.08v1.08h-1.08zM5 24h1.08v1.08h-1.08zM12 24h1.08v1.08h-1.08zM14 24h1.08v1.08h-1.08zM18 24h1.08v1.08h-1.08zM3 26h1.08v1.08h-1.08zM9 26h1.08v1.08h-1.08zM16 26h1.08v1.08h-1.08zM18 26h1.08v1.08h-1.08zM1 27h1.08v1.08h-1.08zM3 27h2.08v1.08h-2.08zM7 27h2.08v1.08h-2.08zM7 28h1.08v1.08h-1.08zM6 29h1.08v1.08h-1.08zM27 30h1.08v1.08h-1.08z"/><path fill="#6c6024" d="M31 4h1.08v1.08h-1.08zM31 22h1.08v1.08h-1.08z"/><path fill="#a87830" d="M2 5h1.08v1.08h-1.08zM27 5h1.08v1.08h-1.08zM25 6h1.08v1.08h-1.08zM29 6h1.08v1.08h-1.08zM28 7h1.08v1.08h-1.08zM2 8h1.08v1.08h-1.08zM29 8h1.08v1.08h-1.08zM1 12h1.08v1.08h-1.08zM18 12h1.08v1.08h-1.08zM20 13h2.08v1.08h-2.08zM19 15h1.08v1.08h-1.08zM15 18h1.08v1.08h-1.08zM17 18h1.08v1.08h-1.08zM19 18h1.08v1.08h-1.08zM13 19h1.08v1.08h-1.08zM20 20h1.08v1.08h-1.08zM17 21h1.08v1.08h-1.08zM15 22h1.08v1.08h-1.08zM17 22h1.08v1.08h-1.08zM10 23h1.08v1.08h-1.08zM12 23h1.08v1.08h-1.08zM14 23h2.08v1.08h-2.08zM17 23h1.08v1.08h-1.08zM16 24h1.08v1.08h-1.08zM4 25h1.08v1.08h-1.08zM4 26h1.08v1.08h-1.08zM10 26h1.08v1.08h-1.08zM12 26h1.08v1.08h-1.08zM6 27h1.08v1.08h-1.08zM11 27h1.08v1.08h-1.08zM13 27h1.08v1.08h-1.08zM13 28h1.08v1.08h-1.08zM13 29h1.08v1.08h-1.08z"/><path fill="#848448" d="M18 5h1.08v1.08h-1.08zM7 10h1.08v1.08h-1.08zM8 11h1.08v1.08h-1.08zM26 12h1.08v1.08h-1.08zM5 13h1.08v1.08h-1.08zM24 13h3.08v1.08h-3.08zM27 14h1.08v1.08h-1.08zM29 14h2.08v1.08h-2.08zM24 15h1.08v1.08h-1.08zM26 15h1.08v1.08h-1.08zM28 15h1.08v1.08h-1.08z"/><path fill="#6c6c30" d="M20 5h1.08v1.08h-1.08zM7 11h1.08v1.08h-1.08zM30 13h1.08v1.08h-1.08zM26 16h1.08v1.08h-1.08z"/><path fill="#b4843c" d="M26 5h1.08v1.08h-1.08zM27 6h1.08v1.08h-1.08zM27 8h1.08v1.08h-1.08zM1 13h1.08v1.08h-1.08zM2 14h1.08v1.08h-1.08zM17 17h1.08v1.08h-1.08zM16 18h1.08v1.08h-1.08zM12 19h1.08v1.08h-1.08zM30 20h1.08v1.08h-1.08zM12 22h1.08v1.08h-1.08zM1 26h1.08v1.08h-1.08zM15 26h1.08v1.08h-1.08zM12 27h1.08v1.08h-1.08zM15 28h1.08v1.08h-1.08zM14 29h1.08v1.08h-1.08z"/><path fill="#9c6c24" d="M1 6h1.08v1.08h-1.08zM1 9h1.08v1.08h-1.08zM2 10h1.08v1.08h-1.08zM21 12h1.08v1.08h-1.08zM17 15h1.08v1.08h-1.08zM17 16h2.08v1.08h-2.08zM15 17h1.08v1.08h-1.08zM14 18h1.08v1.08h-1.08zM18 18h1.08v1.08h-1.08zM30 18h1.08v1.08h-1.08zM15 19h1.08v1.08h-1.08zM18 19h1.08v1.08h-1.08zM12 20h1.08v1.08h-1.08zM14 20h1.08v1.08h-1.08zM18 21h1.08v1.08h-1.08zM13 23h1.08v1.08h-1.08zM1 24h1.08v1.08h-1.08zM4 24h1.08v1.08h-1.08zM17 24h1.08v1.08h-1.08zM1 25h1.08v1.08h-1.08zM15 25h1.08v1.08h-1.08zM5 26h1.08v1.08h-1.08zM11 26h1.08v1.08h-1.08zM13 26h1.08v1.08h-1.08zM9 27h1.08v1.08h-1.08zM12 28h1.08v1.08h-1.08z"/><path fill="#788454" d="M20 6h1.08v1.08h-1.08z"/><path fill="#a8783c" d="M26 6h1.08v1.08h-1.08zM28 6h1.08v1.08h-1.08zM2 9h1.08v1.08h-1.08zM19 11h1.08v1.08h-1.08zM2 13h1.08v1.08h-1.08zM1 15h1.08v1.08h-1.08zM20 17h1.08v1.08h-1.08zM16 20h2.08v1.08h-2.08zM21 20h1.08v1.08h-1.08zM13 22h1.08v1.08h-1.08zM16 25h1.08v1.08h-1.08zM14 28h1.08v1.08h-1.08z"/><path fill="#846024" d="M0 7h1.08v1.08h-1.08zM31 18h1.08v1.08h-1.08zM31 19h1.08v1.08h-1.08z"/><path fill="#b48430" d="M30 7h1.08v1.08h-1.08zM18 13h1.08v1.08h-1.08zM19 16h1.08v1.08h-1.08zM19 20h1.08v1.08h-1.08zM13 24h1.08v1.08h-1.08z"/><path fill="#785418" d="M0 8h1.08v1.08h-1.08zM0 9h1.08v1.08h-1.08zM31 20h1.08v1.08h-1.08zM0 23h1.08v1.08h-1.08z"/><path fill="#846c3c" d="M17 8h1.08v1.08h-1.08zM5 20h1.08v1.08h-1.08zM8 30h1.08v1.08h-1.08z"/><path fill="#846030" d="M31 8h1.08v1.08h-1.08zM30 31h2.08v1.08h-2.08z"/><path fill="#785424" d="M0 10h1.08v1.08h-1.08zM0 11h1.08v1.08h-1.08zM0 14h1.08v1.08h-1.08zM0 15h1.08v1.08h-1.08zM31 17h1.08v1.08h-1.08zM0 25h1.08v1.08h-1.08z"/><path fill="#846c24" d="M10 11h1.08v1.08h-1.08zM30 16h1.08v1.08h-1.08zM23 19h1.08v1.08h-1.08zM26 23h1.08v1.08h-1.08zM27 25h1.08v1.08h-1.08zM19 27h1.08v1.08h-1.08zM26 29h1.08v1.08h-1.08z"/><path fill="#a87824" d="M19 12h1.08v1.08h-1.08zM20 15h1.08v1.08h-1.08zM18 20h1.08v1.08h-1.08zM15 24h1.08v1.08h-1.08zM2 25h1.08v1.08h-1.08zM14 25h1.08v1.08h-1.08z"/><path fill="#60603c" d="M31 12h1.08v1.08h-1.08zM31 13h1.08v1.08h-1.08zM31 14h1.08v1.08h-1.08z"/><path fill="#6c5418" d="M0 13h1.08v1.08h-1.08z"/><path fill="#a86c24" d="M19 14h1.08v1.08h-1.08z"/><path fill="#6c603c" d="M0 19h1.08v1.08h-1.08zM31 24h1.08v1.08h-1.08zM31 29h1.08v1.08h-1.08z"/><path fill="#9c7824" d="M30 19h1.08v1.08h-1.08zM5 27h1.08v1.08h-1.08zM9 28h1.08v1.08h-1.08z"/><path fill="#906030" d="M0 24h1.08v1.08h-1.08z"/><path fill="#a88430" d="M11 25h1.08v1.08h-1.08zM10 28h1.08v1.08h-1.08z"/><path fill="#b47830" d="M2 26h1.08v1.08h-1.08z"/><path fill="#9c6c18" d="M14 26h1.08v1.08h-1.08z"/></symbol></defs></svg><svg class="a" style="left:10px;top:75px" width="110" height="110" shape-rendering="crispEdges"><use href="#tex" width="110" height="110"/></svg><div class="a" style="left:15px;top:80px;font-size:20px;color:#17140c;transform:scaleX(0.58);transform-origin:0 0;white-space:nowrap;line-height:1;font-weight:bold">NORTH</div><div class="a" style="left:9px;top:74px;width:43px;height:15px;border:2px solid #fff;border-radius:2px"></div><svg class="a" style="left:10px;top:195px" width="110" height="110" shape-rendering="crispEdges"><use href="#tex" width="110" height="110"/></svg><div class="a" style="left:15px;top:200px;font-size:20px;color:#17140c;transform:scaleX(0.58);transform-origin:0 0;white-space:nowrap;line-height:1;font-weight:bold">EAST</div><div class="a" style="left:9px;top:194px;width:43px;height:15px;border:2px solid #fff;border-radius:2px"></div><svg class="a" style="left:10px;top:315px" width="110" height="110" shape-rendering="crispEdges"><use href="#tex" width="110" height="110"/></svg><div class="a" style="left:15px;top:320px;font-size:20px;color:#17140c;transform:scaleX(0.58);transform-origin:0 0;white-space:nowrap;line-height:1;font-weight:bold">SOUTH</div><div class="a" style="left:9px;top:314px;width:43px;height:15px;border:2px solid #fff;border-radius:2px"></div><svg class="a" style="left:10px;top:435px" width="110" height="110" shape-rendering="crispEdges"><use href="#tex" width="110" height="110"/></svg><div class="a" style="left:15px;top:440px;font-size:20px;color:#17140c;transform:scaleX(0.58);transform-origin:0 0;white-space:nowrap;line-height:1;font-weight:bold">WEST</div><div class="a" style="left:9px;top:434px;width:43px;height:15px;border:2px solid #fff;border-radius:2px"></div><svg class="a" style="left:10px;top:555px" width="110" height="110" shape-rendering="crispEdges"><use href="#tex" width="110" height="110"/></svg><div class="a" style="left:15px;top:560px;font-size:20px;color:#17140c;transform:scaleX(0.58);transform-origin:0 0;white-space:nowrap;line-height:1;font-weight:bold">OP</div><div class="a" style="left:9px;top:554px;width:112px;height:112px;border:2px solid #fff;border-radius:2px"></div><svg class="a" style="left:10px;top:675px" width="110" height="110" shape-rendering="crispEdges"><use href="#tex" width="110" height="110"/></svg><div class="a" style="left:15px;top:680px;font-size:20px;color:#17140c;transform:scaleX(0.58);transform-origin:0 0;white-space:nowrap;line-height:1;font-weight:bold">DOWN</div><div class="a" style="left:9px;top:674px;width:112px;height:112px;border:2px solid #fff;border-radius:2px"></div><div class="a" style="left:130px;top:45px;width:1228px;height:815px;background:#e9e9eb;border-left:1px solid #707070;border-bottom:1px solid #707070"></div><svg class="a" style="left:0;top:0" width="1600" height="900" viewBox="0 0 1600 900"><defs><clipPath id="vp"><rect x="131" y="45" width="1227" height="814"/></clipPath></defs><g clip-path="url(#vp)"><defs><pattern id="pt1" patternUnits="userSpaceOnUse" width="32" height="32" patternTransform="matrix(5.0938 1.7656 -3.0312 3.2969 767.00 538.50)"><rect width="32" height="32" fill="#8a7640"/><use href="#tex" width="32" height="32"/></pattern><pattern id="pt2" patternUnits="userSpaceOnUse" width="32" height="32" patternTransform="matrix(5.9219 2.6250 -2.2031 4.1562 740.50 511.00)"><rect width="32" height="32" fill="#8a7640"/><use href="#tex" width="32" height="32"/></pattern><pattern id="pf1" patternUnits="userSpaceOnUse" width="14" height="4" patternTransform="matrix(13.5357 6.0000 0.7500 11.7500 670.00 644.00)"><rect width="14" height="4" fill="#8a7640"/><path fill="#545430" d="M0 0h1.08v1.08h-1.08zM5 0h1.08v1.08h-1.08zM9 0h1.08v1.08h-1.08z"/><path fill="#605430" d="M1 0h1.08v1.08h-1.08zM10 0h1.08v1.08h-1.08zM1 1h1.08v1.08h-1.08z"/><path fill="#6c6030" d="M2 0h1.08v1.08h-1.08zM5 1h1.08v1.08h-1.08zM13 1h1.08v1.08h-1.08zM4 2h1.08v1.08h-1.08zM9 3h1.08v1.08h-1.08zM11 3h1.08v1.08h-1.08z"/><path fill="#544830" d="M3 0h1.08v1.08h-1.08z"/><path fill="#544824" d="M4 0h1.08v1.08h-1.08zM6 0h2.08v1.08h-2.08zM13 0h1.08v1.08h-1.08zM10 1h1.08v1.08h-1.08z"/><path fill="#484824" d="M8 0h1.08v1.08h-1.08z"/><path fill="#604824" d="M11 0h1.08v1.08h-1.08z"/><path fill="#483c18" d="M12 0h1.08v1.08h-1.08z"/><path fill="#6c603c" d="M0 1h1.08v1.08h-1.08zM3 1h2.08v1.08h-2.08zM8 1h1.08v1.08h-1.08zM5 2h1.08v1.08h-1.08z"/><path fill="#483018" d="M2 1h1.08v1.08h-1.08zM12 2h1.08v1.08h-1.08z"/><path fill="#606030" d="M6 1h1.08v1.08h-1.08zM12 1h1.08v1.08h-1.08zM1 3h1.08v1.08h-1.08z"/><path fill="#786c3c" d="M7 1h1.08v1.08h-1.08zM0 2h2.08v1.08h-2.08zM6 2h1.08v1.08h-1.08zM8 2h1.08v1.08h-1.08zM2 3h1.08v1.08h-1.08zM10 3h1.08v1.08h-1.08z"/><path fill="#78603c" d="M9 1h1.08v1.08h-1.08z"/><path fill="#786030" d="M11 1h1.08v1.08h-1.08zM10 2h1.08v1.08h-1.08zM6 3h1.08v1.08h-1.08zM8 3h1.08v1.08h-1.08z"/><path fill="#907848" d="M2 2h1.08v1.08h-1.08zM12 3h1.08v1.08h-1.08z"/><path fill="#846c3c" d="M3 2h1.08v1.08h-1.08zM7 2h1.08v1.08h-1.08zM9 2h1.08v1.08h-1.08zM4 3h2.08v1.08h-2.08zM7 3h1.08v1.08h-1.08zM13 3h1.08v1.08h-1.08z"/><path fill="#605424" d="M11 2h1.08v1.08h-1.08zM13 2h1.08v1.08h-1.08zM3 3h1.08v1.08h-1.08z"/><path fill="#6c6c3c" d="M0 3h1.08v1.08h-1.08z"/></pattern><pattern id="pr1" patternUnits="userSpaceOnUse" width="14" height="4" patternTransform="matrix(5.0357 -9.5000 -1.1250 12.6500 859.50 728.00)"><rect width="14" height="4" fill="#8a7640"/><path fill="#545430" d="M0 0h1.08v1.08h-1.08zM5 0h1.08v1.08h-1.08zM9 0h1.08v1.08h-1.08z"/><path fill="#605430" d="M1 0h1.08v1.08h-1.08zM10 0h1.08v1.08h-1.08zM1 1h1.08v1.08h-1.08z"/><path fill="#6c6030" d="M2 0h1.08v1.08h-1.08zM5 1h1.08v1.08h-1.08zM13 1h1.08v1.08h-1.08zM4 2h1.08v1.08h-1.08zM9 3h1.08v1.08h-1.08zM11 3h1.08v1.08h-1.08z"/><path fill="#544830" d="M3 0h1.08v1.08h-1.08z"/><path fill="#544824" d="M4 0h1.08v1.08h-1.08zM6 0h2.08v1.08h-2.08zM13 0h1.08v1.08h-1.08zM10 1h1.08v1.08h-1.08z"/><path fill="#484824" d="M8 0h1.08v1.08h-1.08z"/><path fill="#604824" d="M11 0h1.08v1.08h-1.08z"/><path fill="#483c18" d="M12 0h1.08v1.08h-1.08z"/><path fill="#6c603c" d="M0 1h1.08v1.08h-1.08zM3 1h2.08v1.08h-2.08zM8 1h1.08v1.08h-1.08zM5 2h1.08v1.08h-1.08z"/><path fill="#483018" d="M2 1h1.08v1.08h-1.08zM12 2h1.08v1.08h-1.08z"/><path fill="#606030" d="M6 1h1.08v1.08h-1.08zM12 1h1.08v1.08h-1.08zM1 3h1.08v1.08h-1.08z"/><path fill="#786c3c" d="M7 1h1.08v1.08h-1.08zM0 2h2.08v1.08h-2.08zM6 2h1.08v1.08h-1.08zM8 2h1.08v1.08h-1.08zM2 3h1.08v1.08h-1.08zM10 3h1.08v1.08h-1.08z"/><path fill="#78603c" d="M9 1h1.08v1.08h-1.08z"/><path fill="#786030" d="M11 1h1.08v1.08h-1.08zM10 2h1.08v1.08h-1.08zM6 3h1.08v1.08h-1.08zM8 3h1.08v1.08h-1.08z"/><path fill="#907848" d="M2 2h1.08v1.08h-1.08zM12 3h1.08v1.08h-1.08z"/><path fill="#846c3c" d="M3 2h1.08v1.08h-1.08zM7 2h1.08v1.08h-1.08zM9 2h1.08v1.08h-1.08zM4 3h2.08v1.08h-2.08zM7 3h1.08v1.08h-1.08zM13 3h1.08v1.08h-1.08z"/><path fill="#605424" d="M11 2h1.08v1.08h-1.08zM13 2h1.08v1.08h-1.08zM3 3h1.08v1.08h-1.08z"/><path fill="#6c6c3c" d="M0 3h1.08v1.08h-1.08z"/></pattern></defs><polygon points="670.0,644.0 859.5,728.0 855.0,778.6 673.0,691.0" fill="url(#pf1)" /><polygon points="859.5,728.0 930.0,595.0 923.0,637.0 855.0,778.6" fill="url(#pr1)" /><polygon points="859.5,728.0 930.0,595.0 923.0,637.0 855.0,778.6" fill="rgba(40,30,10,.25)" /><polygon points="767.0,538.5 930.0,595.0 859.5,728.0 670.0,644.0" fill="url(#pt1)" /><polygon points="930.0,595.0 859.5,728.0 670.0,644.0" fill="url(#pt2)" /><path d="M670.0,644.0L859.5,728.0L930.0,595.0M670.0,644.0L673.0,691.0L855.0,778.6L923.0,637.0L930.0,595.0M859.5,728.0L855.0,778.6" stroke="#3a3020" stroke-width="1" fill="none" stroke-opacity=".8"/><polygon points="713.0,495.0 854.0,540.0 841.0,687.5 718.0,637.0" fill="#8c9acc" shape-rendering="crispEdges"/><polygon points="854.0,540.0 908.0,467.0 891.0,608.0 841.0,687.5" fill="#cc8e8e" shape-rendering="crispEdges"/><polygon points="713.0,495.0 854.0,540.0 908.0,467.0 778.0,435.0" fill="#b8fcb0" shape-rendering="crispEdges"/><polygon points="772.3,40.0 867.4,40.0 832.5,508.0 764.0,487.0" fill="#8c9acc" shape-rendering="crispEdges"/><polygon points="867.4,40.0 903.2,40.0 862.5,473.0 832.5,508.0" fill="#cc8e8e" shape-rendering="crispEdges"/><path d="M767.0,538.5L670.0,644.0M767.0,538.5L930.0,595.0M767.0,538.5L767.0,581.0M767.0,581.0L673.0,691.0M767.0,581.0L923.0,637.0" stroke="#2a2a30" stroke-width="1" fill="none"/><g fill="none" stroke-width="1.2"><path d="M721 405.6L723.5 552.6M717 414L721 405.6L725 413" stroke="#00d000"/><path d="M651.7 461.6L801.9 506.9M793 501L801.9 506.9L792 510" stroke="#e00000"/><path d="M764.6 447.6L670.4 528.3M671 519L670.4 528.3L680 527" stroke="#0000e0"/></g><circle cx="722.5" cy="483.5" r="4" fill="#333"/><g stroke="#8a8a8a" stroke-width="1.6"><path d="M1302 738.2L1254 820.9M1236.6 756L1319.8 804"/></g><g fill="#3a3aa0"><path d="M1302 737L1296 744L1304 743Z"/><path d="M1253.5 822L1252 813L1259 816Z"/><path d="M1235 755L1243 753L1240 761Z"/><path d="M1321 805L1313 806L1317 798Z"/></g><text x="0" y="6.5" transform="translate(1310 724) rotate(30) scale(0.66 1)" font-family="Liberation Sans" font-weight="bold" font-size="18" fill="#111" stroke="#111" stroke-width="1.3" text-anchor="middle">N</text><text x="0" y="6.5" transform="translate(1222.9 747) rotate(-60) scale(0.66 1)" font-family="Liberation Sans" font-weight="bold" font-size="18" fill="#111" stroke="#111" stroke-width="1.3" text-anchor="middle">W</text><text x="0" y="6.5" transform="translate(1328.7 809) rotate(30) scale(0.66 1)" font-family="Liberation Sans" font-weight="bold" font-size="18" fill="#111" stroke="#111" stroke-width="1.3" text-anchor="middle">E</text><text x="0" y="6.5" transform="translate(1244 836) rotate(-30) scale(0.66 1)" font-family="Liberation Sans" font-weight="bold" font-size="18" fill="#111" stroke="#111" stroke-width="1.3" text-anchor="middle">S</text></g></svg><div class="a" style="left:1368px;top:45px;width:205px;height:240px;background:#555;border:1px solid #161616;border-right-color:#2a2a2a"></div><div class="a" style="left:1372px;top:50px;width:9px;height:9px;background:#2a2a2a;border:1px solid #000"></div><div class="a" style="left:1374px;top:53.6px;width:5px;height:1.6px;background:#fff"></div><div class="a" style="left:1382px;top:54px;width:7px;height:1px;background:repeating-linear-gradient(to right,#000 0 1px,transparent 1px 2px)"></div><div class="a" style="left:1389px;top:48.84px;font-size:12px;font-weight:normal;color:#fff;white-space:nowrap;line-height:1;text-shadow:1px 1px 0 rgba(0,0,0,.8);">Root</div><div class="a" style="left:1396px;top:61px;width:1px;height:5px;background:repeating-linear-gradient(to bottom,#000 0 1px,transparent 1px 2px)"></div><div class="a" style="left:1392px;top:66px;width:9px;height:9px;background:#2a2a2a;border:1px solid #000"></div><div class="a" style="left:1394px;top:69.6px;width:5px;height:1.6px;background:#fff"></div><div class="a" style="left:1402px;top:70px;width:7px;height:1px;background:repeating-linear-gradient(to right,#000 0 1px,transparent 1px 2px)"></div><svg style="position:absolute;left:1410px;top:62px" width="14" height="15" viewBox="0 0 14 15"><path d="M7 0L14 3L7 6L0 3Z" fill="#4a6cf0"/><path d="M0 3L7 6L7 15L0 12Z" fill="#f04040"/><path d="M7 6L14 3L14 12L7 15Z" fill="#30b040"/></svg><div class="a" style="left:1428px;top:62px;width:41px;height:16px;border:2px solid #f5b800;background:#2e2e2e"></div><div class="a" style="left:1429.5px;top:64.84px;font-size:12px;font-weight:normal;color:#fff;white-space:nowrap;line-height:1;text-shadow:1px 1px 0 rgba(0,0,0,.8);">Cube1</div><div class="a" style="left:1416px;top:78px;width:1px;height:8px;background:repeating-linear-gradient(to bottom,#000 0 1px,transparent 1px 2px)"></div><div class="a" style="left:1416px;top:86px;width:13px;height:1px;background:repeating-linear-gradient(to right,#000 0 1px,transparent 1px 2px)"></div><svg style="position:absolute;left:1430px;top:78px" width="14" height="15" viewBox="0 0 14 15"><path d="M7 0L14 3L7 6L0 3Z" fill="#4a6cf0"/><path d="M0 3L7 6L7 15L0 12Z" fill="#f04040"/><path d="M7 6L14 3L14 12L7 15Z" fill="#30b040"/></svg><div class="a" style="left:1449px;top:80.84px;font-size:12px;font-weight:normal;color:#fff;white-space:nowrap;line-height:1;text-shadow:1px 1px 0 rgba(0,0,0,.8);">Cube2</div><div class="a" style="left:1396px;top:76px;width:1px;height:22px;background:repeating-linear-gradient(to bottom,#000 0 1px,transparent 1px 2px)"></div><div class="a" style="left:1392px;top:98px;width:9px;height:9px;background:#2a2a2a;border:1px solid #000"></div><div class="a" style="left:1394px;top:101.6px;width:5px;height:1.6px;background:#fff"></div><div class="a" style="left:1402px;top:102px;width:7px;height:1px;background:repeating-linear-gradient(to right,#000 0 1px,transparent 1px 2px)"></div><svg style="position:absolute;left:1410px;top:94px" width="14" height="15" viewBox="0 0 14 15"><path d="M7 0L14 3L7 6L0 3Z" fill="#4a6cf0"/><path d="M0 3L7 6L7 15L0 12Z" fill="#f04040"/><path d="M7 6L14 3L14 12L7 15Z" fill="#30b040"/></svg><div class="a" style="left:1429px;top:96.84px;font-size:12px;font-weight:normal;color:#fff;white-space:nowrap;line-height:1;text-shadow:1px 1px 0 rgba(0,0,0,.8);">Cube3</div><div class="a" style="left:1416px;top:110px;width:1px;height:8px;background:repeating-linear-gradient(to bottom,#000 0 1px,transparent 1px 2px)"></div><div class="a" style="left:1416px;top:118px;width:13px;height:1px;background:repeating-linear-gradient(to right,#000 0 1px,transparent 1px 2px)"></div><svg style="position:absolute;left:1430px;top:110px" width="14" height="15" viewBox="0 0 14 15"><path d="M7 0L14 3L7 6L0 3Z" fill="#4a6cf0"/><path d="M0 3L7 6L7 15L0 12Z" fill="#f04040"/><path d="M7 6L14 3L14 12L7 15Z" fill="#30b040"/></svg><div class="a" style="left:1449px;top:112.84px;font-size:12px;font-weight:normal;color:#fff;white-space:nowrap;line-height:1;text-shadow:1px 1px 0 rgba(0,0,0,.8);">Cube4</div><div class="a" style="left:1583px;top:45px;width:17px;height:815px;background:linear-gradient(to right,#2a2a2a,#3a3a3a)"></div><div class="a" style="left:1584px;top:46px;width:15px;height:15px;border:1px solid #6a6a6a;background:linear-gradient(#4a4a4a,#2a2a2a)"></div><svg class="a" style="left:1584px;top:46px" width="15" height="15"><path d="M4.5 8.5L7.5 5.5L10.5 8.5" stroke="#ddd" stroke-width="2.2" fill="none"/></svg><div class="a" style="left:1583px;top:62px;width:17px;height:605px;border:1px solid #6a6a6a;border-right-color:#1a1a1a;background:linear-gradient(to right,#555,#3a3a3a 60%,#2a2a2a)"></div><div class="a" style="left:1588px;top:361px;width:7px;height:1px;background:#888;box-shadow:0 2px 0 #888,0 4px 0 #888,0 6px 0 #888"></div><div class="a" style="left:1584px;top:843px;width:15px;height:15px;border:1px solid #6a6a6a;background:linear-gradient(#4a4a4a,#2a2a2a)"></div><svg class="a" style="left:1584px;top:843px" width="15" height="15"><path d="M4.5 6L7.5 9L10.5 6" stroke="#ddd" stroke-width="2.2" fill="none"/></svg><div class="btn" style="left:1369px;top:291px;width:64px;height:29px"></div><div class="btn" style="left:1438px;top:291px;width:64px;height:29px"></div><div class="btn" style="left:1507px;top:291px;width:64px;height:29px"></div><svg style="position:absolute;left:1393px;top:296px" width="16" height="20" viewBox="0 0 14 15" preserveAspectRatio="none"><path d="M7 0L14 3L7 6L0 3Z" fill="#4a6cf0"/><path d="M0 3L7 6L7 15L0 12Z" fill="#f04040"/><path d="M7 6L14 3L14 12L7 15Z" fill="#30b040"/></svg><svg class="a" style="left:1460px;top:296px" width="20" height="21" viewBox="0 0 20 21"><path d="M2 3Q10 0 18 3L18 5L2 5Z" fill="#bbb"/><path d="M7 1H13V3H7Z" fill="#999"/><path d="M3 5H17L15.5 20Q10 21 4.5 20Z" fill="#c8c8c8"/><path d="M6.5 7V18M10 7V19M13.5 7V18" stroke="#888" stroke-width="1.2"/></svg><svg class="a" style="left:1528.5px;top:295px" width="21" height="21" viewBox="0 0 21 21"><path d="M1 1H9L12 4V14.5H1Z" fill="#e8e8e8" stroke="#bbb" stroke-width=".6"/><path d="M9 1V4H12" fill="#fff" stroke="#aaa" stroke-width=".6"/><path d="M8 6H16L19 9V19.5H8Z" fill="#f0f0f0" stroke="#bbb" stroke-width=".6"/><path d="M16 6V9H19" fill="#fff" stroke="#aaa" stroke-width=".6"/></svg><div class="a" style="left:1368px;top:327px;width:205px;height:25px;background:#323232;border:2px solid #050505;border-right-width:1px;border-bottom-width:1px"></div><div class="a" style="left:1370px;top:333.84px;font-size:12px;font-weight:normal;color:#fff;white-space:nowrap;line-height:1;text-shadow:1px 1px 0 rgba(0,0,0,.8);">Cube1</div><div class="a" style="left:1374px;top:372px;width:44px;height:20px;border-radius:5px 5px 0 0;background:linear-gradient(#474747,#2a2a2a);border:1px solid #1a1a1a;border-bottom:none"></div><div class="a" style="left:1380.5px;top:376.84px;font-size:12px;font-weight:bold;color:#fff;white-space:nowrap;line-height:1;text-shadow:1px 1px 0 rgba(0,0,0,.8);">Cube</div><div class="a" style="left:1418px;top:372px;width:42px;height:20px;border-radius:5px 5px 0 0;background:linear-gradient(#5a5a5a,#3e3e3e);border:1px solid #1a1a1a;border-bottom:none"></div><div class="a" style="left:1424.0px;top:375.84px;font-size:12px;font-weight:bold;color:#fff;white-space:nowrap;line-height:1;text-shadow:1px 1px 0 rgba(0,0,0,.8);">Face</div><div class="a" style="left:1460px;top:372px;width:70px;height:20px;border-radius:5px 5px 0 0;background:linear-gradient(#474747,#2a2a2a);border:1px solid #1a1a1a;border-bottom:none"></div><div class="a" style="left:1467.5px;top:376.84px;font-size:12px;font-weight:bold;color:#fff;white-space:nowrap;line-height:1;text-shadow:1px 1px 0 rgba(0,0,0,.8);">Keyframe</div><div class="a" style="left:1530px;top:372px;width:23px;height:20px;border-radius:5px 5px 0 0;background:linear-gradient(#474747,#2a2a2a);border:1px solid #1a1a1a;border-bottom:none"></div><div class="a" style="left:1537.0px;top:376.84px;font-size:12px;font-weight:bold;color:#fff;white-space:nowrap;line-height:1;text-shadow:1px 1px 0 rgba(0,0,0,.8);">P</div><div class="a" style="left:1368px;top:392px;width:205px;height:1px;background:#5a5a5a"></div><div class="a" style="left:1368px;top:393px;width:205px;height:3px;background:linear-gradient(#181818,rgba(30,30,30,0))"></div><div class="a" style="left:1368px;top:394px;width:1px;height:466px;background:#2a2a2a"></div><div class="a" style="left:1572px;top:394px;width:1px;height:466px;background:#2a2a2a"></div><div class="a" style="left:1385px;top:403.84px;font-size:12px;font-weight:bold;color:#fff;white-space:nowrap;line-height:1;text-shadow:1px 1px 0 rgba(0,0,0,.8);">Side</div><div class="fld" style="left:1381px;top:419px;width:177px;height:27px;background:#4e4e4e"></div><div class="a" style="left:1389px;top:426.84px;font-size:12px;font-weight:bold;color:#a8f0a0;white-space:nowrap;line-height:1;text-shadow:1px 1px 0 rgba(0,0,0,.8);">Up</div><div class="btn" style="left:1533px;top:421px;width:24px;height:24px"></div><svg class="a" style="left:1533px;top:421px" width="24" height="24"><path d="M8.5 11L12 14.5L15.5 11" stroke="#ddd" stroke-width="2" fill="none"/></svg><div class="a" style="left:1385px;top:452.84px;font-size:12px;font-weight:bold;color:#fff;white-space:nowrap;line-height:1;text-shadow:1px 1px 0 rgba(0,0,0,.8);">Texture</div><div class="btn" style="left:1381px;top:469px;width:86px;height:31px"></div><div class="a" style="left:1413px;top:478.73px;font-size:14.5px;font-weight:bold;color:#fff;white-space:nowrap;line-height:1;text-shadow:1px 1px 0 rgba(0,0,0,.8);">Image</div><div class="btn" style="left:1472px;top:469px;width:86px;height:31px"></div><div class="a" style="left:1509px;top:478.73px;font-size:14.5px;font-weight:bold;color:#fff;white-space:nowrap;line-height:1;text-shadow:1px 1px 0 rgba(0,0,0,.8);">Clear</div><div class="btn" style="left:1381px;top:505px;width:86px;height:31px"></div><div class="a" style="left:1419px;top:514.73px;font-size:14.5px;font-weight:bold;color:#fff;white-space:nowrap;line-height:1;text-shadow:1px 1px 0 rgba(0,0,0,.8);">Copy</div><div class="btn" style="left:1472px;top:505px;width:86px;height:31px"></div><div class="a" style="left:1507px;top:514.73px;font-size:14.5px;font-weight:bold;color:#fff;white-space:nowrap;line-height:1;text-shadow:1px 1px 0 rgba(0,0,0,.8);">Paste</div><svg class="a" style="left:1392.5px;top:476.5px" width="17" height="16" viewBox="0 0 17 16"><defs><linearGradient id="sky" x1="0" y1="0" x2="0" y2="1"><stop offset="0" stop-color="#c8b8d8"/><stop offset="1" stop-color="#8ac8f8"/></linearGradient></defs><rect x=".75" y=".75" width="15.5" height="14.5" fill="#fff" stroke="#b0661e" stroke-width="1.5"/><rect x="2.5" y="2.5" width="12" height="11" fill="url(#sky)"/><path d="M2.5 13.5V9Q4 6 6 8Q9 4 12 7L13 8L8 12Z" fill="#8a9a30"/><path d="M3 13.5Q8 12 10.5 9L12 9.5Q9 13 6 13.5Z" fill="#e8b020"/></svg><svg class="a" style="left:1485px;top:475px" width="20" height="20" viewBox="0 0 20 20"><defs><linearGradient id="oct" x1="0" y1="0" x2="0" y2="1"><stop offset="0" stop-color="#e85040"/><stop offset="1" stop-color="#e06a58"/></linearGradient></defs><path d="M6 .5H14L19.5 6V14L14 19.5H6L.5 14V6Z" fill="url(#oct)"/><path d="M5.8 5.8L14.2 14.2M14.2 5.8L5.8 14.2" stroke="#fff" stroke-width="3"/></svg><svg class="a" style="left:1395px;top:511px" width="21" height="21" viewBox="0 0 21 21"><path d="M1 1H9L12 4V14.5H1Z" fill="#e8e8e8" stroke="#bbb" stroke-width=".6"/><path d="M9 1V4H12" fill="#fff" stroke="#aaa" stroke-width=".6"/><path d="M8 6H16L19 9V19.5H8Z" fill="#f0f0f0" stroke="#bbb" stroke-width=".6"/><path d="M16 6V9H19" fill="#fff" stroke="#aaa" stroke-width=".6"/></svg><svg class="a" style="left:1484.5px;top:511px" width="21" height="21" viewBox="0 0 21 21"><rect x="0" y="1.5" width="13.5" height="16" fill="#c89058"/><rect x="4" y="0" width="6" height="3" rx="1" fill="#d8d8d8"/><path d="M7.5 5H15.5L18.5 8V19H7.5Z" fill="#f0f0f0" stroke="#bbb" stroke-width=".6"/><path d="M15.5 5V8H18.5" fill="#fff" stroke="#aaa" stroke-width=".6"/></svg><div class="a" style="left:1384px;top:543.44px;font-size:12px;font-weight:bold;color:#fff;white-space:nowrap;line-height:1;text-shadow:1px 1px 0 rgba(0,0,0,.8);">Face UV</div><div class="btn" style="left:1382px;top:559px;width:40px;height:30px"></div><svg class="a" style="left:1382px;top:559px" width="40" height="30"><path d="M10 20.5L20 7.5L30 20.5Z" fill="#fff"/></svg><div class="fld" style="left:1382px;top:594px;width:41px;height:31px;background:#4a4a4a;border:2px solid #050505"></div><div class="a" style="left:1397.0px;top:600.07px;font-size:20px;font-weight:normal;color:#fff;white-space:nowrap;line-height:1;text-shadow:1px 1px 0 rgba(0,0,0,.8);">0</div><div class="btn" style="left:1382px;top:629px;width:40px;height:30px"></div><svg class="a" style="left:1382px;top:629px" width="40" height="30"><path d="M10 9.5L30 9.5L20 22.5Z" fill="#fff"/></svg><div class="btn" style="left:1427px;top:559px;width:40px;height:30px"></div><svg class="a" style="left:1427px;top:559px" width="40" height="30"><path d="M10 20.5L20 7.5L30 20.5Z" fill="#fff"/></svg><div class="fld" style="left:1427px;top:594px;width:41px;height:31px;background:#4a4a4a;border:2px solid #050505"></div><div class="a" style="left:1442.0px;top:600.07px;font-size:20px;font-weight:normal;color:#fff;white-space:nowrap;line-height:1;text-shadow:1px 1px 0 rgba(0,0,0,.8);">0</div><div class="btn" style="left:1427px;top:629px;width:40px;height:30px"></div><svg class="a" style="left:1427px;top:629px" width="40" height="30"><path d="M10 9.5L30 9.5L20 22.5Z" fill="#fff"/></svg><div class="btn" style="left:1472px;top:559px;width:40px;height:30px"></div><svg class="a" style="left:1472px;top:559px" width="40" height="30"><path d="M10 20.5L20 7.5L30 20.5Z" fill="#fff"/></svg><div class="fld" style="left:1472px;top:594px;width:41px;height:31px;background:#4a4a4a;border:2px solid #050505"></div><div class="a" style="left:1481.5px;top:600.07px;font-size:20px;font-weight:normal;color:#fff;white-space:nowrap;line-height:1;text-shadow:1px 1px 0 rgba(0,0,0,.8);">16</div><div class="btn" style="left:1472px;top:629px;width:40px;height:30px"></div><svg class="a" style="left:1472px;top:629px" width="40" height="30"><path d="M10 9.5L30 9.5L20 22.5Z" fill="#fff"/></svg><div class="btn" style="left:1517px;top:559px;width:40px;height:30px"></div><svg class="a" style="left:1517px;top:559px" width="40" height="30"><path d="M10 20.5L20 7.5L30 20.5Z" fill="#fff"/></svg><div class="fld" style="left:1517px;top:594px;width:41px;height:31px;background:#4a4a4a;border:2px solid #050505"></div><div class="a" style="left:1526.5px;top:600.07px;font-size:20px;font-weight:normal;color:#fff;white-space:nowrap;line-height:1;text-shadow:1px 1px 0 rgba(0,0,0,.8);">16</div><div class="btn" style="left:1517px;top:629px;width:40px;height:30px"></div><svg class="a" style="left:1517px;top:629px" width="40" height="30"><path d="M10 9.5L30 9.5L20 22.5Z" fill="#fff"/></svg><div class="a" style="left:1382px;top:667.54px;font-size:12px;font-weight:bold;color:#fff;white-space:nowrap;line-height:1;text-shadow:1px 1px 0 rgba(0,0,0,.8);">Rotation</div><div class="a" style="left:1392px;top:693px;width:155px;height:12px;border:1px solid #000"></div><div class="a" style="left:1392px;top:709px;width:1px;height:7px;background:#000"></div><svg class="a" style="left:1386px;top:689px" width="14" height="21" viewBox="0 0 14 21"><defs><linearGradient id="cap" x1="0" x2="1"><stop offset="0" stop-color="#8a8a8a"/><stop offset=".5" stop-color="#9a9a9a"/><stop offset=".5" stop-color="#606870"/><stop offset="1" stop-color="#505860"/></linearGradient></defs><rect x="0" y="0" width="13" height="4" fill="url(#cap)"/><path d="M0 4H13V13.5L6.5 20.5L0 13.5Z" fill="#7a7a80"/><path d="M1.5 4H6.5V19L1.5 13Z" fill="#f2f4f8"/><path d="M6.5 4H11.5V13L6.5 19Z" fill="#c4c6cc"/></svg><div class="a" style="left:1386px;top:720.34px;font-size:12px;font-weight:bold;color:#fff;white-space:nowrap;line-height:1;text-shadow:1px 1px 0 rgba(0,0,0,.8);">0°</div><div class="a" style="left:1435px;top:720.34px;font-size:12px;font-weight:bold;color:#fff;white-space:nowrap;line-height:1;text-shadow:1px 1px 0 rgba(0,0,0,.8);">90°</div><div class="a" style="left:1483.5px;top:720.34px;font-size:12px;font-weight:bold;color:#fff;white-space:nowrap;line-height:1;text-shadow:1px 1px 0 rgba(0,0,0,.8);">180°</div><div class="a" style="left:1534px;top:720.34px;font-size:12px;font-weight:bold;color:#fff;white-space:nowrap;line-height:1;text-shadow:1px 1px 0 rgba(0,0,0,.8);">270°</div><div class="a" style="left:1384px;top:747.14px;font-size:12px;font-weight:bold;color:#fff;white-space:nowrap;line-height:1;text-shadow:1px 1px 0 rgba(0,0,0,.8);">Properties</div><div class="a" style="left:1386px;top:767px;width:14px;height:14px;border-radius:50%;background:radial-gradient(circle at 40% 35%,#b0f030,#6ab000 70%,#4a8000)"></div><div class="a" style="left:1405px;top:770.34px;font-size:12px;font-weight:bold;color:#fff;white-space:nowrap;line-height:1;text-shadow:1px 1px 0 rgba(0,0,0,.8);">Enabled</div><div class="a" style="left:1475px;top:767px;width:14px;height:14px;border-radius:50%;background:radial-gradient(circle at 40% 35%,#aaa,#666 70%,#444)"></div><div class="a" style="left:1494px;top:770.34px;font-size:12px;font-weight:bold;color:#fff;white-space:nowrap;line-height:1;text-shadow:1px 1px 0 rgba(0,0,0,.8);">Auto UV</div><div class="a" style="left:1381px;top:793.84px;font-size:12px;font-weight:bold;color:#fff;white-space:nowrap;line-height:1;text-shadow:1px 1px 0 rgba(0,0,0,.8);">Glow Level</div><div class="fld" style="left:1470px;top:787px;width:89px;height:24px;background:#4e4e4e"></div><div class="a" style="left:1472px;top:793.84px;font-size:12px;font-weight:normal;color:#fff;white-space:nowrap;line-height:1;text-shadow:1px 1px 0 rgba(0,0,0,.8);">0</div><div class="a" style="left:0;top:860px;width:1600px;height:40px;background:#000"></div><div class="a" style="left:759px;top:860px;width:151px;height:40px;background:#2e2e2e"></div><svg class="a" style="left:16px;top:872px" width="16" height="16" viewBox="0 0 16 16"><path d="M0 2.2L6.5 1.3V7.5H0ZM7.3 1.2L16 0V7.5H7.3ZM0 8.3H6.5V14.7L0 13.8ZM7.3 8.3H16V16L7.3 14.8Z" fill="#fff"/></svg><div class="ul" style="left:55px;width:144px"></div><div class="ul" style="left:257px;width:143px"></div><div class="ul" style="left:459px;width:143px"></div><div class="ul" style="left:611px;width:143px"></div><div class="ul" style="left:759px;width:151px"></div><div class="ul" style="left:915px;width:143px"></div><div class="ul" style="left:1067px;width:144px"></div><div class="ul" style="left:1219px;width:143px"></div><div class="a" style="left:89px;top:874.18px;font-size:11.6px;font-weight:normal;color:#f0f0f0;white-space:nowrap;line-height:1;text-shadow:none;">Screenshots</div><div class="a" style="left:291px;top:874.18px;font-size:11.6px;font-weight:normal;color:#f0f0f0;white-space:nowrap;line-height:1;text-shadow:none;">10763. Yes - Real L...</div><div class="a" style="left:493px;top:874.18px;font-size:11.6px;font-weight:normal;color:#f0f0f0;white-space:nowrap;line-height:1;text-shadow:none;">#gameplay - Disc...</div><div class="a" style="left:645px;top:874.18px;font-size:11.6px;font-weight:normal;color:#f0f0f0;white-space:nowrap;line-height:1;text-shadow:none;">Create New Topic...</div><div class="a" style="left:797px;top:874.18px;font-size:11.6px;font-weight:normal;color:#f0f0f0;white-space:nowrap;line-height:1;text-shadow:none;letter-spacing:0.3px;">(untitled) * Vintag...</div><div class="a" style="left:949px;top:874.18px;font-size:11.6px;font-weight:normal;color:#f0f0f0;white-space:nowrap;line-height:1;text-shadow:none;">Screenshot 2018-...</div><div class="a" style="left:1101px;top:874.18px;font-size:11.6px;font-weight:normal;color:#f0f0f0;white-space:nowrap;line-height:1;text-shadow:none;">Screenshot 2018-...</div><div class="a" style="left:1253px;top:874.18px;font-size:11.6px;font-weight:normal;color:#f0f0f0;white-space:nowrap;line-height:1;text-shadow:none;">Screenshot 2018-...</div><svg class="a" style="left:64px;top:871px" width="16" height="20" viewBox="0 0 16 20"><path d="M1 1L5 0V3H14V17H5V20L1 18Z" fill="#e8c050"/><path d="M5 3H14V17H5Z" fill="#f8d878"/></svg><svg class="a" style="left:218px;top:869px" width="21" height="22" viewBox="0 0 21 22"><path d="M8 1H13L19 20H2Z" fill="#f08000"/><path d="M6 7H15L16 10H5ZM4 13H17L18 16H3Z" fill="#ddd"/><rect x="0" y="19" width="21" height="3" fill="#f08000"/></svg><svg class="a" style="left:265px;top:869px" width="21" height="21" viewBox="0 0 21 21"><path d="M10 1L20 10L10 20L1 10Z" fill="none" stroke="#ddd" stroke-width="2"/><path d="M13 2L5 11H10L7 19L16 9H11Z" fill="#f0a020"/></svg><svg class="a" style="left:419px;top:869px" width="22" height="22" viewBox="0 0 22 22"><circle cx="11" cy="11" r="10.5" fill="#db4437"/><path d="M11 11L2 6A10.5 10.5 0 0 0 8 21Z" fill="#0f9d58"/><path d="M11 11L20 6A10.5 10.5 0 0 1 8 21Z" fill="#f4c20d"/><circle cx="11" cy="11" r="5" fill="#fff"/><circle cx="11" cy="11" r="4" fill="#4285f4"/></svg><svg class="a" style="left:618px;top:869px" width="22" height="22" viewBox="0 0 22 22"><circle cx="11" cy="11" r="10.5" fill="#db4437"/><path d="M11 11L2 6A10.5 10.5 0 0 0 8 21Z" fill="#0f9d58"/><path d="M11 11L20 6A10.5 10.5 0 0 1 8 21Z" fill="#f4c20d"/><circle cx="11" cy="11" r="5" fill="#fff"/><circle cx="11" cy="11" r="4" fill="#4285f4"/></svg><svg class="a" style="left:467px;top:870px" width="20" height="20" viewBox="0 0 20 20"><path d="M2 1H18V19L15 16H2Z" fill="#7289da"/><path d="M5 9Q5 6 7 5L13 5Q15 6 15 9L14 12H6Z" fill="#fff"/><circle cx="8" cy="9.5" r="1.2" fill="#7289da"/><circle cx="12" cy="9.5" r="1.2" fill="#7289da"/></svg><svg class="a" style="left:769px;top:868px" width="24" height="24" viewBox="0 0 24 24"><rect x="0" y="0" width="24" height="24" rx="2" fill="#e8eef4"/><path d="M12 4Q9 7 12 10M14 3Q11 6 14 9" stroke="#e07020" fill="none" stroke-width="1.3"/><path d="M6 13H17Q17 18 12 19Q7 18 6 13Z" fill="none" stroke="#3a70b0" stroke-width="1.3"/><path d="M5 20H19" stroke="#3a70b0" stroke-width="1.3"/></svg><svg class="a" style="left:925px;top:869px" width="16" height="22" viewBox="0 0 16 22"><rect x="0" y="0" width="16" height="22" fill="#3a3a3a"/><rect x="1" y="2" width="14" height="3" fill="#555"/></svg><svg class="a" style="left:1073px;top:868px" width="24" height="24" viewBox="0 0 24 24"><path d="M5 4Q9 1 12 5L16 3L15 8Q19 10 17 14L20 18L16 20L13 16Q9 19 7 15L3 17L5 12Q1 9 5 4Z" fill="#c81010"/><circle cx="7" cy="5" r="2.5" fill="#eee"/><circle cx="7" cy="5" r="1" fill="#000"/></svg><svg class="a" style="left:1225px;top:868px" width="24" height="24" viewBox="0 0 24 24"><path d="M5 4Q9 1 12 5L16 3L15 8Q19 10 17 14L20 18L16 20L13 16Q9 19 7 15L3 17L5 12Q1 9 5 4Z" fill="#c81010"/><circle cx="7" cy="5" r="2.5" fill="#eee"/><circle cx="7" cy="5" r="1" fill="#000"/></svg><svg class="a" style="left:1375px;top:874px" width="13" height="8"><path d="M1 7L6.5 1.5L12 7" stroke="#fff" stroke-width="1.3" fill="none"/></svg><svg class="a" style="left:1397px;top:871px" width="16" height="16" viewBox="0 0 16 16"><circle cx="8" cy="8" r="8" fill="#1a4a80"/><circle cx="10.5" cy="5.5" r="2.5" fill="none" stroke="#fff" stroke-width="1.3"/><path d="M0 9L6 11L10 6" stroke="#fff" stroke-width="1.5" fill="none"/><circle cx="5.5" cy="11" r="1.8" fill="#fff"/></svg><svg class="a" style="left:1422px;top:873px" width="15" height="13" viewBox="0 0 15 13"><path d="M4 0L7.5 2.3L4 4.6L0.5 2.3ZM11 0L14.5 2.3L11 4.6L7.5 2.3ZM4 4.6L7.5 6.9L4 9.2L0.5 6.9ZM11 4.6L14.5 6.9L11 9.2L7.5 6.9ZM7.5 7.6L11 9.9L7.5 12.2L4 9.9Z" fill="#fff"/></svg><div class="a" style="left:1447px;top:873.84px;font-size:12px;font-weight:normal;color:#fff;white-space:nowrap;line-height:1;text-shadow:none;">ENG</div><div class="a" style="left:1491px;top:864.84px;font-size:12px;font-weight:normal;color:#fff;white-space:nowrap;line-height:1;text-shadow:none;">2:42 PM</div><div class="a" style="left:1483px;top:882.84px;font-size:12px;font-weight:normal;color:#fff;white-space:nowrap;line-height:1;text-shadow:none;">2018-05-10</div><svg class="a" style="left:1559px;top:872px" width="17" height="17" viewBox="0 0 17 17"><path d="M0 0H17V12H6L3 15V12H0Z" fill="#fff"/><path d="M3 3H14M3 6H14M3 9H10" stroke="#000" stroke-width="1"/></svg><div class="a" style="left:1595px;top:860px;width:1px;height:40px;background:#555"></div></body></html>
